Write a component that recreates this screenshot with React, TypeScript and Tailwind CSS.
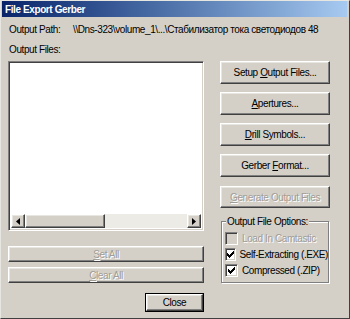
import React from 'react';

const raised =
  'border border-t-white border-l-white border-r-[#404040] border-b-[#404040] shadow-[inset_-1px_-1px_#808080,inset_1px_1px_#e8e6e0]';

const dim = 'text-[#a09d97] [text-shadow:1px_1px_0_#ffffff]';

function Btn({ children, disabled, className = '' }: { children?: React.ReactNode; disabled?: boolean; className?: string }) {
  return (
    <div
      className={`flex items-center justify-center whitespace-nowrap bg-[#d4d0c8] ${raised} ${
        disabled ? dim : 'text-black'
      } ${className}`}
    >
      {children}
    </div>
  );
}

function Check({ checked, disabled, label }: { checked?: boolean; disabled?: boolean; label: string }) {
  return (
    <div className="flex items-center gap-[4px] h-[15px] whitespace-nowrap">
      <div
        className={`w-[13px] h-[13px] border border-t-[#808080] border-l-[#808080] border-r-white border-b-white shadow-[inset_1px_1px_#404040,inset_-1px_-1px_#d4d0c8] flex items-center justify-center ${
          disabled ? 'bg-[#d4d0c8]' : 'bg-white'
        }`}
      >
        {checked && (
          <svg width="7" height="7" viewBox="0 0 7 7">
            <path d="M0 2h1v1h1v1h1V3h1V2h1V1h1V0h1v3H6v1H5v1H4v1H3v1H2V6H1V5H0z" fill="#000" />
          </svg>
        )}
      </div>
      <span className={disabled ? dim : 'text-black'}>{label}</span>
    </div>
  );
}

export default function App() {
  return (
    <div
      className="w-[350px] h-[319px] bg-[#d4d0c8] text-[10px] tracking-[-0.4px] leading-[13px] text-black flex flex-col border border-t-[#e8e6e0] border-l-[#e8e6e0] border-r-[#404040] border-b-[#404040] pr-[1px] pb-[1px]"
      style={{ fontFamily: '"Liberation Sans", Arial, sans-serif' }}
    >
      {/* title bar */}
      <div className="h-[16px] mx-[1px] bg-gradient-to-r from-[#0a246a] to-[#a6caf0] flex items-center px-[3px]">
        <span className="text-white font-bold text-[10px] tracking-[-0.4px] whitespace-nowrap">File Export Gerber</span>
      </div>

      <div className="flex-1 flex flex-col px-[7px]">
        <div className="flex mt-[6px] h-[13px] whitespace-nowrap">
          <span className="w-[65px] pl-[1px]">Output Path:</span>
          <span>\\Dns-323\volume_1\...\Стабилизатор тока светодиодов 48</span>
        </div>
        <div className="mt-[7px] h-[13px] pl-[1px]">Output Files:</div>

        <div className="flex mt-[5px] gap-[16px]">
          {/* left column */}
          <div className="w-[196px] flex flex-col">
            <div className="h-[170px] border border-t-[#808080] border-l-[#808080] border-r-white border-b-white shadow-[inset_1px_1px_#404040,inset_-1px_-1px_#d4d0c8] bg-white flex flex-col justify-end p-[2px]">
              <div className="h-[14px] flex bg-[#ecebe6]">
                <Btn className="w-[14px] h-[14px]">
                  <svg width="4" height="7" viewBox="0 0 4 7">
                    <path d="M4 0v7L0 3.5z" fill="#000" />
                  </svg>
                </Btn>
                <Btn className="w-[80px] h-[14px]" />
                <div className="flex-1" />
                <Btn className="w-[14px] h-[14px]">
                  <svg width="4" height="7" viewBox="0 0 4 7">
                    <path d="M0 0v7l4-3.5z" fill="#000" />
                  </svg>
                </Btn>
              </div>
            </div>
            <Btn disabled className="h-[16px] mt-[15px]">
              <span>
                <u>S</u>et All
              </span>
            </Btn>
            <Btn disabled className="h-[16px] mt-[5px]">
              <span>
                <u>C</u>lear All
              </span>
            </Btn>
            <div className="self-end mt-[10px] w-[59px] h-[19px] border border-black flex">
              <Btn className="flex-1">Close</Btn>
            </div>
          </div>

          {/* right column */}
          <div className="w-[110px] flex flex-col">
            <Btn className="h-[23px]">
              <span>
                Setup <u>O</u>utput Files...
              </span>
            </Btn>
            <Btn className="h-[23px] mt-[8px]">
              <span>
                <u>A</u>pertures...
              </span>
            </Btn>
            <Btn className="h-[23px] mt-[8px]">
              <span>
                <u>D</u>rill Symbols...
              </span>
            </Btn>
            <Btn className="h-[23px] mt-[8px]">
              <span>
                Gerber <u>F</u>ormat...
              </span>
            </Btn>
            <Btn disabled className="h-[22px] mt-[9px]">
              <span>
                <u>G</u>enerate Output Files
              </span>
            </Btn>

            <div className="relative mt-[13px] mx-[1px] h-[62px] border border-[#808080] shadow-[1px_1px_#ffffff,inset_1px_1px_#ffffff] flex flex-col pt-[9px] pl-[3px] gap-[1px]">
              <span className="absolute -top-[7px] left-[4px] px-[1px] bg-[#d4d0c8] whitespace-nowrap">Output File Options:</span>
              <Check disabled label="Load In Camtastic" />
              <Check checked label="Self-Extracting (.EXE)" />
              <Check checked label="Compressed (.ZIP)" />
            </div>
          </div>
        </div>
      </div>
    </div>
  );
}
